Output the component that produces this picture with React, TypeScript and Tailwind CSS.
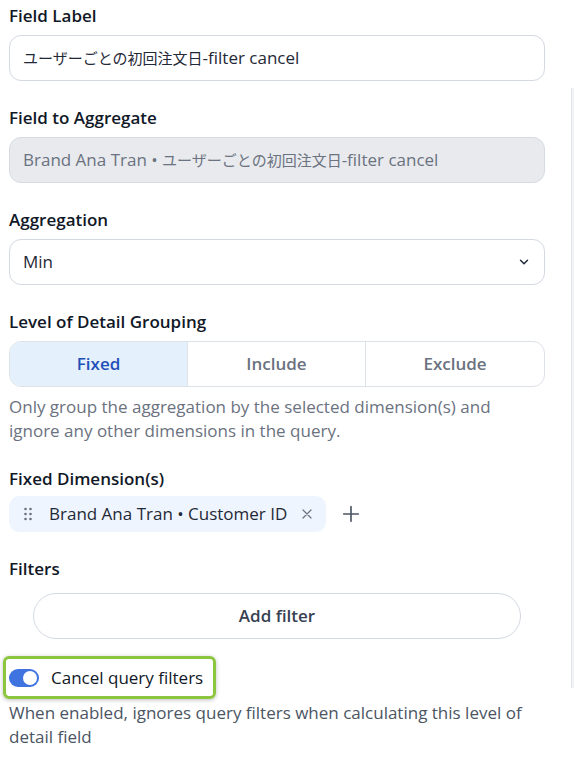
import React from "react";

const font = { fontFamily: '"Open Sans", "Noto Sans CJK JP", sans-serif' };

function Label({ children, mb = "mb-[7px]" }: { children: React.ReactNode; mb?: string }) {
  return <div className={"text-[17px] font-semibold leading-[24px] text-[#111827] " + mb}>{children}</div>;
}

function JP({ children }: { children: React.ReactNode }) {
  return <span className="text-[15px]" style={{ fontFamily: '"Noto Sans CJK JP", sans-serif' }}>{children}</span>;
}

export default function App() {
  return (
    <div className="relative w-[575px] h-[777px] bg-white overflow-hidden" style={font}>
      <div className="absolute right-[1px] top-[88px] h-[600px] w-[3px] border-l border-[#e3e5ea] bg-[#f3f4f6]" />
      <div className="flex flex-col pl-[9px] pr-[30px] pt-[4px]">
        <Label>Field Label</Label>
        <div className="h-[46px] rounded-[12px] border border-[#d3d8e2] flex items-center px-[13px] text-[17px] text-[#1f2937]">
          <JP>ユーザーごとの初回注文日</JP>-filter cancel
        </div>

        <div className="mt-[25px]">
          <Label>Field to Aggregate</Label>
          <div className="h-[46px] rounded-[12px] border border-[#d6dbe3] bg-[#e8eaee] flex items-center px-[13px] text-[17px] text-[#6b7280]">
            Brand Ana Tran •&nbsp;<JP>ユーザーごとの初回注文日</JP>-filter cancel
          </div>
        </div>

        <div className="mt-[25px]">
          <Label>Aggregation</Label>
          <div className="h-[46px] rounded-[12px] border border-[#d3d8e2] flex items-center justify-between px-[13px] text-[17px] text-[#1f2937]">
            <span>Min</span>
            <svg width="14" height="14" viewBox="0 0 24 24" fill="none" stroke="#1f2937" strokeWidth="2.5" strokeLinecap="round" strokeLinejoin="round">
              <path d="M6 9l6 6 6-6" />
            </svg>
          </div>
        </div>

        <div className="mt-[25px]">
          <Label>Level of Detail Grouping</Label>
          <div className="h-[46px] rounded-[12px] border border-[#dde1e8] grid grid-cols-3 overflow-hidden text-[17px] font-semibold">
            <div className="bg-[#e4f1fc] text-[#1e4fb8] flex items-center justify-center border-r border-[#dde1e8]">Fixed</div>
            <div className="text-[#6b7280] flex items-center justify-center border-r border-[#dde1e8]">Include</div>
            <div className="text-[#6b7280] flex items-center justify-center">Exclude</div>
          </div>
          <p className="mt-[8px] text-[17px] leading-[24px] text-[#6b7280]">
            Only group the aggregation by the selected dimension(s) and ignore any other dimensions in the query.
          </p>
        </div>

        <div className="mt-[24px]">
          <Label mb="mb-[5px]">Fixed Dimension(s)</Label>
          <div className="flex items-center gap-[14px]">
            <div className="h-[36px] rounded-[10px] bg-[#eff5fe] flex items-center pl-[15px] pr-[11px] text-[17px] text-[#1f2937]">
              <svg width="8" height="14" viewBox="0 0 8 14" className="mr-[17px]">
                {[0, 1, 2].map((r) =>
                  [0, 1].map((c) => <circle key={r + "-" + c} cx={1.5 + c * 5} cy={2 + r * 5} r="1.3" fill="#6b7280" />)
                )}
              </svg>
              <span>Brand Ana Tran • Customer ID</span>
              <svg width="16" height="16" viewBox="0 0 24 24" fill="none" stroke="#6b7280" strokeWidth="1.8" strokeLinecap="round" className="ml-[12px]">
                <path d="M6 6l12 12M18 6L6 18" />
              </svg>
            </div>
            <svg width="22" height="22" viewBox="0 0 24 24" fill="none" stroke="#4b5563" strokeWidth="1.8" strokeLinecap="round">
              <path d="M12 4v16M4 12h16" />
            </svg>
          </div>
        </div>

        <div className="mt-[25px]">
          <Label mb="mb-[12px]">Filters</Label>
          <div className="px-[24px]">
            <div className="h-[46px] rounded-full border border-[#d3d8e2] flex items-center justify-center text-[17px] font-semibold text-[#374151]">
              Add filter
            </div>
          </div>
        </div>

        <div className="mt-[17px] -ml-[6px] self-start rounded-[6px] border-[3px] border-[#8cc63f] shadow-[0_1px_4px_rgba(0,0,0,0.25)] flex items-center gap-[12px] pl-[3px] pr-[10px] h-[43px]">
          <div className="w-[30px] h-[18px] rounded-full bg-[#3e73e0] flex items-center justify-end pr-[2px]">
            <div className="w-[14px] h-[14px] rounded-full bg-white" />
          </div>
          <span className="text-[17px] text-[#111827]">Cancel query filters</span>
        </div>
        <p className="mt-[2px] text-[17px] leading-[24px] text-[#4b5563]">
          When enabled, ignores query filters when calculating this level of detail field
        </p>
      </div>
    </div>
  );
}
